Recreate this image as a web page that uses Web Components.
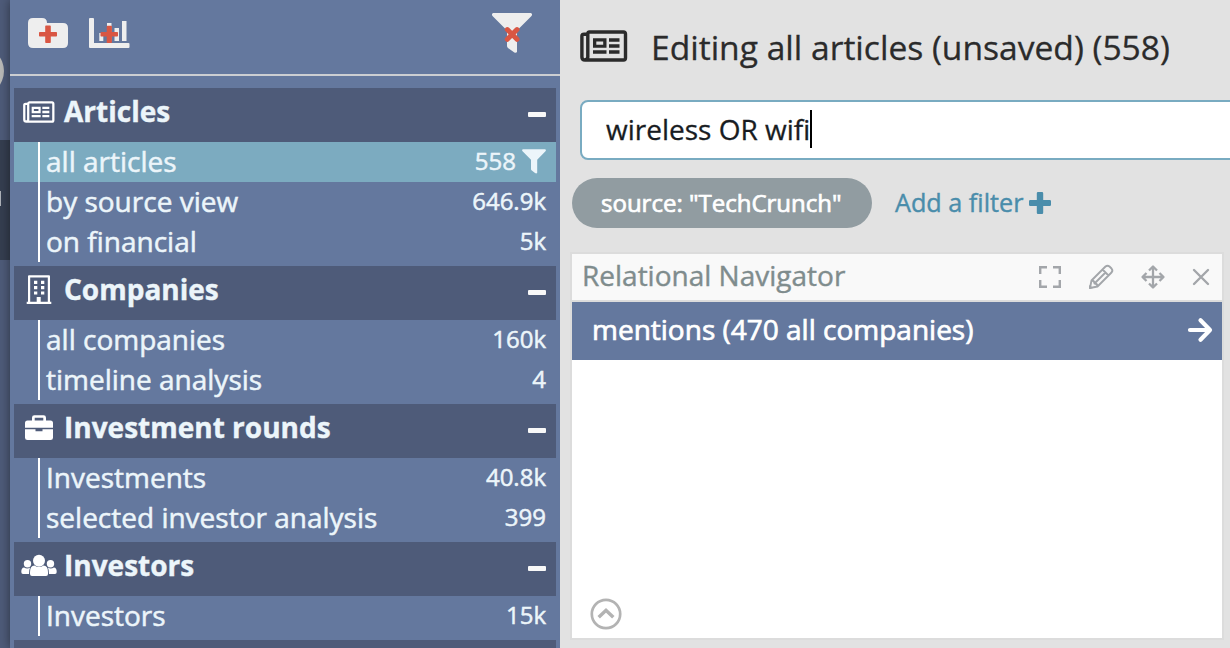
<!DOCTYPE html>
<html lang="en">
<head>
<meta charset="utf-8">
<title>Articles</title>
<style>
html,body{margin:0;height:100%;overflow:hidden}
body{font-family:"Open Sans","Noto Sans",sans-serif;background:#e2e2e2}
</style>
</head>
<body>
<app-shell></app-shell>
<script>
const ICONS = {
  news: [48,32,`<path d="M7.800 4.200H4Q1.900 4.200 1.900 6V27Q1.900 30 5 30H43.500Q45.500 30 45.500 28V4Q45.500 2 43.500 2H9.500Q7.800 2 7.800 4V27Q7.800 29.500 5 30" fill="none" stroke="currentColor" stroke-width="3.400" stroke-linejoin="round"/><path fill="currentColor" fill-rule="evenodd" d="M13 8.300h13.500v9.400H13zm3.300 3.200v3.200h6.900v-3.200zM29 8.300h10.500v3.500H29zm0 5.900h10.500v3.500H29zM13 20.200h13.500v3.600H13zm16 0h10.500v3.600H29z"/>`],
  building: [26,30,`<path fill="currentColor" fill-rule="evenodd" d="M3 .2h20q1 0 1 1V26.700h1.300V29H.700v-2.300H2V1.200q0-1 1-1zM4.200 2.400V26.700h6.500V22h4v4.700h7.100V2.400z"/><path fill="currentColor" d="M8 5.800h3.300v3.200H8zm7 0h3.300v3.200H15zM8 11h3.300v3.200H8zm7 0h3.300v3.200H15zM8 16.400h3.300v3.200H8zm7 0h3.300v3.200H15z"/>`],
  briefcase: [28,26,`<path fill="currentColor" fill-rule="evenodd" d="M7 5.500V2.700Q7 .3 9.400.3h9.200Q21 .3 21 2.700V5.500h4.500Q28 5.500 28 8V12.800H0V8Q0 5.500 2.500 5.500zM9.700 5.500h8.600V2.800H9.700zM0 14.300h10.500v2h7v-2H28v8.500q0 2.300-2.500 2.300h-23Q0 25.100 0 22.800z"/>`],
  users: [36,24,`<g fill="currentColor"><circle cx="18" cy="6.700" r="6"/><path d="M9 20V18q0-6.500 4.500-6.500 4.500 3 9 0Q27 11.500 27 18v2q0 2-2 2H11q-2 0-2-2z"/><circle cx="6.500" cy="9.700" r="3.700"/><circle cx="29.500" cy="9.700" r="3.700"/><path d="M.3 18q0-4.500 2.800-4.500 3.200 2 6 0-1.100 2-1.100 6.500H2Q.3 20 .3 18zM35.700 18q0-4.500-2.800-4.500-3.200 2-6 0 1.100 2 1.100 6.500h6q1.700 0 1.700-2z"/></g>`],
  folder: [40,32,`<path fill="#eee" d="M5 1h9q5 0 5 5h16q5 0 5 5v15q0 5-5 5H5q-5 0-5-5V6q0-5 5-5z"/><path fill="#d95643" d="M18 8.500h4q.8 0 .8.800V15h5.400q.8 0 .8.800v3q0 .8-.8.800h-5.400v5.600q0 .8-.8.800h-4q-.8 0-.8-.8v-5.600h-5.400q-.8 0-.8-.8v-3q0-.8.800-.8h5.400V9.300q0-.8.800-.8z"/>`],
  chart: [42,32,`<path fill="#eee" d="M1 1h3q1 0 1 1v24H39.500q1 0 1 1v3q0 1-1 1H1q-1 0-1-1V2q0-1 1-1zM10.300 16h4v8h-4zM18 6h4.500v18H18zM25.500 11h4.500v13h-4.500zM33 4h4.500v20H33z"/><path fill="#d95643" d="M18.500 8.700h3.600q.8 0 .8.800V15h5.300q.8 0 .8.800v3q0 .8-.8.800h-5.300v5.600q0 .8-.8.800h-3.600q-.8 0-.8-.8v-5.600h-5.400q-.8 0-.8-.8v-3q0-.8.800-.8h5.400V9.500q0-.8.800-.8z"/>`],
  clearfilter: [40,42,`<path fill="#eee" d="M1 1h38q1.800 1 .5 3L25 18.500V40q-1 1.500-3 .3L16 36q-1-1-1-2V18.500L.5 4Q-.8 2 1 1z"/><path d="m15.300 17.600 9.700 9.700m0-9.700-9.700 9.700" stroke="#d95643" stroke-width="5" stroke-linecap="round" fill="none"/>`],
  filter: [24,25,`<path fill="currentColor" d="M.8.300h22.400q1.200.500.500 1.800L15.200 10.800V23.800q-.7 1-2.200.3L9.500 21.300Q9 20.800 9 20V10.800L.3 2.100Q-.4.800.8.300z"/>`],
  plus: [22,22,`<path fill="currentColor" d="M9 0h4q1.200 0 1.200 1.200V8h6.600Q22 8 22 9.200v3.600q0 1.200-1.200 1.200h-6.600v6.800q0 1.200-1.200 1.200H9q-1.200 0-1.200-1.200V14H1.200Q0 14 0 12.800V9.200Q0 8 1.200 8h6.600V1.200Q7.800 0 9 0z"/>`],
  expand: [22,22,`<path d="M1.200 8V1.200H8M14 1.200h6.800V8M20.800 14v6.800H14M8 20.800H1.200V14" fill="none" stroke="currentColor" stroke-width="2.400"/>`],
  pencil: [26,26,`<path d="M2 24 3.500 16.500 17.500 2.500Q19.500.800 21.500 2.500L23.500 4.500Q25.200 6.500 23.500 8.500L9.500 22.500zM14.500 5.500l6 6M17.500 8.500 7 19M3.500 16.500q3 0 3 3 3 0 3 3" fill="none" stroke="currentColor" stroke-width="1.900" stroke-linejoin="round"/><path fill="currentColor" d="M1 25v-4l4 3z"/>`],
  move: [24,24,`<path d="M12 1.500v21M1.500 12h21M8 5.500l4-4 4 4M8 18.500l4 4 4-4M5.500 8l-4 4 4 4M18.500 8l4 4-4 4" fill="none" stroke="currentColor" stroke-width="2.300" stroke-linejoin="round"/>`],
  close: [16,16,`<path d="M1 1l14 14M15 1 1 15" fill="none" stroke="currentColor" stroke-width="2.400" stroke-linecap="round"/>`],
  arrow: [24,24,`<path d="M2 12h19M12.500 2.200 22 12l-9.500 9.800" fill="none" stroke="currentColor" stroke-width="4.200" stroke-linecap="round" stroke-linejoin="round"/>`],
  up: [32,32,`<circle cx="16" cy="16" r="14.200" fill="none" stroke="currentColor" stroke-width="2.700"/><path d="m8.700 19.300 7.300-7 7.300 7" fill="none" stroke="currentColor" stroke-width="3.500"/>`]
};

class UiIcon extends HTMLElement {
  connectedCallback() {
    if (this.shadowRoot) return;
    const [w, h, body] = ICONS[this.getAttribute('name')];
    const width = this.getAttribute('width') || w;
    const height = this.getAttribute('height') || h;
    this.attachShadow({mode: 'open'}).innerHTML =
      `<style>:host{display:block;flex:none}svg{display:block;overflow:visible}</style>
       <svg width="${width}" height="${height}" viewBox="0 0 ${w} ${h}" preserveAspectRatio="none" aria-hidden="true">${body}</svg>`;
  }
}
customElements.define('ui-icon', UiIcon);

function define(name, markup) {
  const template = document.createElement('template');
  template.innerHTML = markup;
  customElements.define(name, class extends HTMLElement {
    constructor() {
      super();
      this.attachShadow({mode: 'open'}).append(template.content.cloneNode(true));
    }
  });
}

define('nav-item', `<style>
  :host{display:flex;height:40px;box-sizing:border-box;padding-right:10px;color:#ecf5fa;background:var(--row,transparent);white-space:nowrap;-webkit-text-stroke:.5px #ecf5fa}
  .rule{width:2px;margin-left:24px;background:#fff}
  .label{flex:1;padding-left:6px;font-size:28px;line-height:39px}
  .count{display:flex;gap:6px;font-size:24px;line-height:38px}
  ::slotted(ui-icon){margin-top:7px}
  </style><span class="rule"></span><span class="label"><slot></slot></span><span class="count"><slot name="count"></slot><slot name="mark"></slot></span>`);

define('nav-section', `<style>
  :host{display:block;margin-bottom:4px}
  header{display:flex;height:54px;background:#4e5b79;color:#ecf5fa;padding:0 10px 0 8px}
  .icon{width:34px;height:48px;display:flex;align-items:center;justify-content:center;color:#fff;margin-right:8px}
  .title{flex:1;font-size:28px;line-height:46px;font-weight:700;white-space:nowrap;-webkit-text-stroke:.4px #ecf5fa}
  .minus{width:18px;height:5px;border-radius:1px;background:#f8f8f8;margin-top:24px}
  </style><header><span class="icon"><slot name="icon"></slot></span><span class="title"><slot name="title"></slot></span><span class="minus"></span></header><slot></slot>`);

define('side-bar', `<style>
  :host{display:flex;flex-direction:column;width:550px;height:648px;background:#64789e;box-shadow:0 0 10px rgba(0,0,0,.45);position:relative}
  .tools{display:flex;height:74px;flex:none;border-bottom:2px solid #ccced2;padding:0 28px 0 18px}
  .tools ui-icon{margin-top:17px}
  .tools ui-icon + ui-icon{margin-left:21px}
  .tools ui-icon:last-child{margin:12px 0 0 auto}
  nav{padding:12px 4px 0;height:560px;overflow:hidden}
  .active{--row:#7cabc0}
  </style>
  <div class="tools"><ui-icon name="folder"></ui-icon><ui-icon name="chart"></ui-icon><ui-icon name="clearfilter"></ui-icon></div>
  <nav>
  <nav-section><ui-icon slot="icon" name="news" width="32" height="22"></ui-icon><span slot="title">Articles</span>
    <nav-item class="active">all articles<span slot="count">558</span><ui-icon slot="mark" name="filter"></ui-icon></nav-item>
    <nav-item>by source view<span slot="count">646.9k</span></nav-item>
    <nav-item>on financial<span slot="count">5k</span></nav-item></nav-section>
  <nav-section><ui-icon slot="icon" name="building"></ui-icon><span slot="title">Companies</span>
    <nav-item>all companies<span slot="count">160k</span></nav-item>
    <nav-item>timeline analysis<span slot="count">4</span></nav-item></nav-section>
  <nav-section><ui-icon slot="icon" name="briefcase"></ui-icon><span slot="title">Investment rounds</span>
    <nav-item>Investments<span slot="count">40.8k</span></nav-item>
    <nav-item>selected investor analysis<span slot="count">399</span></nav-item></nav-section>
  <nav-section><ui-icon slot="icon" name="users"></ui-icon><span slot="title">Investors</span>
    <nav-item>Investors<span slot="count">15k</span></nav-item></nav-section>
  <nav-section></nav-section>
  </nav>`);

define('edge-rail', `<style>
  :host{display:block;width:10px;height:648px;background:#4e5b79;overflow:hidden}
  .knob{width:50px;height:50px;border-radius:50%;background:#b9b9b7;margin:46px 0 44px -46px}
  .tab{height:120px;background:#353e50;display:flex;align-items:center}
  .tab i{width:1px;height:15px;background:#aeb2b9;margin-top:-4px}
  </style><div class="knob"></div><div class="tab"><i></i></div>`);

define('search-field', `<style>
  :host{display:flex;align-items:center;box-sizing:border-box;height:60px;width:680px;border:2px solid #79abc1;border-radius:8px;background:#fff;color:#181c22;font-size:28px;padding:0 0 2px 24px;white-space:nowrap;-webkit-text-stroke:.3px #181c22}
  .caret{width:2px;height:38px;background:#000}
  </style><slot></slot><span class="caret"></span>`);

define('filter-bar', `<style>
  :host{display:flex;align-items:center;height:50px}
  .chip{box-sizing:border-box;width:300px;height:50px;border-radius:25px;background:#919ca1;color:#fff;font-size:24px;line-height:49px;padding-left:29px;white-space:nowrap;-webkit-text-stroke:.7px #fff}
  .add{display:flex;align-items:center;color:#4a8dab;font-size:25.2px;line-height:48px;margin-left:23px;gap:6px;white-space:nowrap;-webkit-text-stroke:.4px #4a8dab}
  .add span{margin-top:-2px}
  </style><span class="chip">source: "TechCrunch"</span><span class="add"><span>Add a filter</span><ui-icon name="plus"></ui-icon></span>`);

define('relation-panel', `<style>
  :host{display:flex;flex-direction:column;box-sizing:border-box;width:654px;height:388px;border:2px solid #dcdcdc;background:#fff}
  header{display:flex;align-items:center;height:46px;background:#f9f9f9;border-bottom:2px solid #dcdcdc;color:#a3a6aa;padding:0 13px 0 10px}
  h2{margin:0;flex:1;font-size:28px;line-height:42px;height:46px;font-weight:400;color:#7f8c8d;white-space:nowrap;-webkit-text-stroke:.4px #7f8c8d}
  .row{display:flex;align-items:center;justify-content:space-between;height:58px;background:#64789e;color:#fff;font-size:28px;padding:0 10px 0 20px;-webkit-text-stroke:.7px #fff}
  .row span{line-height:54px;height:58px}
  .row ui-icon{margin-top:-3px}
  .body{flex:1;display:flex;align-items:flex-end;padding:0 0 8px 18px;color:#b3b3b3}
  .expand{margin-right:27px}
  .pencil{margin-right:27px}
  .move{margin-right:28px}
  </style>
  <header><h2>Relational Navigator</h2><ui-icon class="expand" name="expand"></ui-icon><ui-icon class="pencil" name="pencil"></ui-icon><ui-icon class="move" name="move"></ui-icon><ui-icon name="close"></ui-icon></header>
  <div class="row"><span>mentions (470 all companies)</span><ui-icon name="arrow"></ui-icon></div>
  <div class="body"><ui-icon name="up"></ui-icon></div>`);

define('editor-pane', `<style>
  :host{display:block;width:670px;height:648px;background:#e2e2e2;overflow:hidden;position:relative}
  .head{display:flex;height:100px;padding-left:20px;color:#2b2b2b}
  .head ui-icon{margin-top:30px}
  h1{margin:0 0 0 23px;font-size:33.6px;line-height:94px;font-weight:400;white-space:nowrap;-webkit-text-stroke:.3px #2b2b2b}
  search-field{margin-left:20px}
  filter-bar{margin:18px 0 24px 12px}
  relation-panel{margin-left:10px}
  </style>
  <div class="head"><ui-icon name="news"></ui-icon><h1>Editing all articles (unsaved) (558)</h1></div>
  <search-field>wireless OR wifi</search-field>
  <filter-bar></filter-bar>
  <relation-panel></relation-panel>`);

define('app-shell', `<style>:host{display:flex;width:1230px;height:648px;overflow:hidden}edge-rail,side-bar,editor-pane{flex:none}</style><edge-rail></edge-rail><side-bar></side-bar><editor-pane></editor-pane>`);
</script>
</body>
</html>
